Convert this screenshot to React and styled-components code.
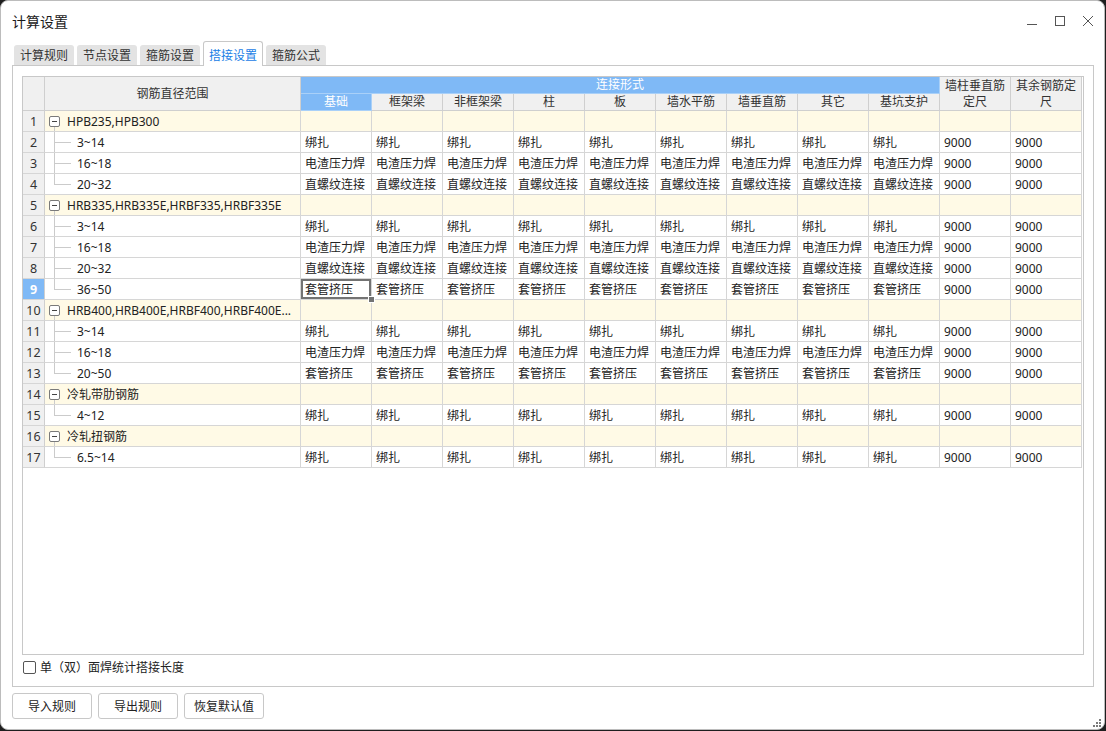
import React from 'react';
import styled, { createGlobalStyle, css } from 'styled-components';

const GlobalStyle = createGlobalStyle`
  html, body {
    margin: 0;
    padding: 0;
    background: #1e1e1e;
    overflow: hidden;
  }
  body {
    font-family: "Noto Sans", "Noto Sans CJK SC", sans-serif;
    font-size: 12px;
    color: #222;
  }
`;

const Window = styled.div`
  position: relative;
  box-sizing: border-box;
  width: 1105px;
  height: 730px;
  background: #fff;
  border: 1px solid #bcbcbc;
  border-radius: 8px;
  display: flex;
  flex-direction: column;
`;

const TitleBar = styled.div`
  height: 40px;
  display: flex;
  align-items: center;
  padding: 0 10px 0 11px;
`;

const Title = styled.div`
  font-size: 14px;
  color: #1a1a1a;
`;

const Controls = styled.div`
  margin-left: auto;
  display: flex;
  align-items: center;
  gap: 16px;
`;

const TabBar = styled.div`
  height: 24px;
  display: flex;
  align-items: flex-end;
  gap: 3px;
  padding-left: 13px;
`;

const Tab = styled.div`
  box-sizing: border-box;
  width: 60px;
  height: 20px;
  display: flex;
  align-items: center;
  justify-content: center;
  background: #e3e3e3;
  color: #333;
  border-radius: 3px 3px 0 0;
  ${({ $active }) =>
    $active &&
    css`
      position: relative;
      z-index: 1;
      height: 25px;
      margin-bottom: -1px;
      background: #fff;
      color: #1a80e6;
      border: 1px solid #c8c8c8;
      border-bottom: none;
      padding-top: 1px;
    `}
`;

const Panel = styled.div`
  box-sizing: border-box;
  height: 622px;
  margin: 0 10px 0 11px;
  border: 1px solid #c8c8c8;
  padding: 10px 9px 0 9px;
  display: flex;
  flex-direction: column;
`;

const Grid = styled.div`
  box-sizing: border-box;
  height: 579px;
  border: 1px solid #c8c8c8;
  background: #fff;
  overflow: hidden;
`;

const Table = styled.table`
  table-layout: fixed;
  width: 1059px;
  border-collapse: separate;
  border-spacing: 0;
  font-size: 12px;
`;

const HeadCell = styled.th`
  box-sizing: border-box;
  height: 17px;
  padding: 0 2px;
  font-weight: normal;
  text-align: center;
  line-height: 16px;
  color: #333;
  background: ${({ $blue }) => ($blue ? '#7fb9f6' : '#f0f0f0')};
  ${({ $blue }) => $blue && 'color: #fff;'}
  border-right: 1px solid ${({ $blue }) => ($blue ? '#a9d0f8' : '#cfcfcf')};
  border-bottom: 1px solid ${({ $blue }) => ($blue ? '#a9d0f8' : '#cfcfcf')};
`;

const NumCell = styled.td`
  box-sizing: border-box;
  height: 21px;
  padding: 0;
  text-align: center;
  font-size: 12.5px;
  color: ${({ $selected }) => ($selected ? '#fff' : '#333')};
  font-weight: ${({ $selected }) => ($selected ? 'bold' : 'normal')};
  background: ${({ $selected }) => ($selected ? '#7fb9f6' : '#f0f0f0')};
  border-right: 1px solid #cfcfcf;
  border-bottom: 1px solid #d6d6d6;
`;

const Cell = styled.td`
  position: relative;
  box-sizing: border-box;
  height: 21px;
  padding: 0 4px;
  white-space: nowrap;
  overflow: hidden;
  color: #222;
  background: ${({ $group }) => ($group ? '#fffae6' : '#fff')};
  border-right: 1px solid #d6d6d6;
  border-bottom: 1px solid #d6d6d6;
  ${({ $current }) =>
    $current &&
    css`
      overflow: visible;
      box-shadow: inset 0 0 0 2px #737373;
      &::after {
        content: '';
        position: absolute;
        right: -4px;
        bottom: -4px;
        width: 5px;
        height: 5px;
        background: #737373;
        border: 1px solid #fff;
        z-index: 2;
      }
    `}
`;

const NameCell = styled.td`
  box-sizing: border-box;
  height: 21px;
  padding: 0;
  white-space: nowrap;
  overflow: hidden;
  background: ${({ $group }) => ($group ? '#fffae6' : '#fff')};
  border-right: 1px solid #d6d6d6;
  border-bottom: 1px solid #d6d6d6;
`;

const NameLine = styled.div`
  display: flex;
  align-items: center;
  height: 20px;
  font-size: 12px;
`;

const Toggle = styled.span`
  position: relative;
  box-sizing: border-box;
  flex: none;
  width: 11px;
  height: 11px;
  margin-left: 4px;
  margin-right: 7px;
  border: 1px solid #7a7a7a;
  border-radius: 2px;
  background: #fff;
  display: flex;
  align-items: center;
  justify-content: center;
  &::before {
    content: '';
    width: 5px;
    height: 1px;
    background: #444;
  }
  &::after {
    content: '';
    position: absolute;
    left: 4px;
    top: 10px;
    width: 1px;
    height: 6px;
    background: #cbcbcb;
  }
`;

const Connector = styled.span`
  position: relative;
  flex: none;
  width: 32px;
  height: 21px;
  align-self: flex-start;
  margin-top: -1px;
  &::before {
    content: '';
    position: absolute;
    left: 9px;
    top: 0;
    width: 1px;
    height: ${({ $last }) => ($last ? '11px' : '22px')};
    background: #cbcbcb;
  }
  &::after {
    content: '';
    position: absolute;
    left: 9px;
    top: 11px;
    width: 17px;
    height: 1px;
    background: #cbcbcb;
  }
`;

const Footer = styled.div`
  height: 24px;
  display: flex;
  align-items: center;
  gap: 4px;
  padding-left: 1px;
`;

const CheckBox = styled.span`
  box-sizing: border-box;
  width: 13px;
  height: 13px;
  border: 1px solid #555;
  border-radius: 2px;
  background: #fff;
`;

const ButtonRow = styled.div`
  display: flex;
  gap: 6px;
  padding: 6px 0 0 11px;
`;

const Button = styled.button`
  box-sizing: border-box;
  width: 80px;
  height: 26px;
  border: 1px solid #c8c8c8;
  border-radius: 3px;
  background: #fff;
  color: #222;
  font-family: "Noto Sans", "Noto Sans CJK SC", sans-serif;
  font-size: 12px;
  padding: 0;
`;

const Grip = styled.svg`
  position: absolute;
  right: 2px;
  bottom: 1px;
`;

const tabs = ['计算规则', '节点设置', '箍筋设置', '搭接设置', '箍筋公式'];
const kinds = ['基础', '框架梁', '非框架梁', '柱', '板', '墙水平筋', '墙垂直筋', '其它', '基坑支护'];

const groups = [
  {
    name: 'HPB235,HPB300',
    items: [
      ['3~14', '绑扎'],
      ['16~18', '电渣压力焊'],
      ['20~32', '直螺纹连接'],
    ],
  },
  {
    name: 'HRB335,HRB335E,HRBF335,HRBF335E',
    items: [
      ['3~14', '绑扎'],
      ['16~18', '电渣压力焊'],
      ['20~32', '直螺纹连接'],
      ['36~50', '套管挤压'],
    ],
  },
  {
    name: 'HRB400,HRB400E,HRBF400,HRBF400E...',
    items: [
      ['3~14', '绑扎'],
      ['16~18', '电渣压力焊'],
      ['20~50', '套管挤压'],
    ],
  },
  { name: '冷轧带肋钢筋', items: [['4~12', '绑扎']] },
  { name: '冷轧扭钢筋', items: [['6.5~14', '绑扎']] },
];

// flatten groups into grid rows
const rows = [];
groups.forEach(g => {
  rows.push({ group: true, name: g.name });
  g.items.forEach(([range, way], i) => {
    rows.push({ group: false, name: range, way, last: i === g.items.length - 1 });
  });
});

const SELECTED_ROW = 9;

const WindowControls = () => (
  <Controls>
    <svg width="12" height="12" viewBox="0 0 12 12">
      <path d="M1 9.5h10" stroke="#555" strokeWidth="1" />
    </svg>
    <svg width="12" height="12" viewBox="0 0 12 12">
      <rect x="1.5" y="1.5" width="9" height="9" fill="none" stroke="#555" strokeWidth="1" />
    </svg>
    <svg width="12" height="12" viewBox="0 0 12 12">
      <path d="M1 1l10 10M11 1L1 11" stroke="#555" strokeWidth="1" />
    </svg>
  </Controls>
);

const App = () => (
  <>
    <GlobalStyle />
    <Window>
      <TitleBar>
        <Title>计算设置</Title>
        <WindowControls />
      </TitleBar>
      <TabBar>
        {tabs.map(t => (
          <Tab key={t} $active={t === '搭接设置'}>
            {t}
          </Tab>
        ))}
      </TabBar>
      <Panel>
        <Grid>
          <Table>
            <colgroup>
              <col style={{ width: 22 }} />
              <col style={{ width: 256 }} />
              {kinds.map(k => (
                <col key={k} style={{ width: 71 }} />
              ))}
              <col style={{ width: 71 }} />
              <col style={{ width: 71 }} />
            </colgroup>
            <thead>
              <tr>
                <HeadCell rowSpan={2} />
                <HeadCell rowSpan={2}>钢筋直径范围</HeadCell>
                <HeadCell colSpan={9} $blue>
                  连接形式
                </HeadCell>
                <HeadCell rowSpan={2}>墙柱垂直筋定尺</HeadCell>
                <HeadCell rowSpan={2}>其余钢筋定尺</HeadCell>
              </tr>
              <tr>
                {kinds.map((k, i) => (
                  <HeadCell key={k} $blue={i === 0}>
                    {k}
                  </HeadCell>
                ))}
              </tr>
            </thead>
            <tbody>
              {rows.map((r, idx) => {
                const n = idx + 1;
                return (
                  <tr key={n}>
                    <NumCell $selected={n === SELECTED_ROW}>{n}</NumCell>
                    <NameCell $group={r.group}>
                      <NameLine>
                        {r.group ? <Toggle /> : <Connector $last={r.last} />}
                        {r.name}
                      </NameLine>
                    </NameCell>
                    {kinds.map((k, i) => (
                      <Cell key={k} $group={r.group} $current={n === SELECTED_ROW && i === 0}>
                        {r.group ? '' : r.way}
                      </Cell>
                    ))}
                    <Cell $group={r.group}>{r.group ? '' : '9000'}</Cell>
                    <Cell $group={r.group}>{r.group ? '' : '9000'}</Cell>
                  </tr>
                );
              })}
            </tbody>
          </Table>
        </Grid>
        <Footer>
          <CheckBox />
          <span>单（双）面焊统计搭接长度</span>
        </Footer>
      </Panel>
      <ButtonRow>
        <Button>导入规则</Button>
        <Button>导出规则</Button>
        <Button>恢复默认值</Button>
      </ButtonRow>
      <Grip width="9" height="9" viewBox="0 0 9 9">
        <g fill="#7a7a7a">
          <rect x="6" y="0" width="2" height="2" />
          <rect x="3" y="3" width="2" height="2" />
          <rect x="6" y="3" width="2" height="2" />
          <rect x="0" y="6" width="2" height="2" />
          <rect x="3" y="6" width="2" height="2" />
          <rect x="6" y="6" width="2" height="2" />
        </g>
      </Grip>
    </Window>
  </>
);

export default App;
